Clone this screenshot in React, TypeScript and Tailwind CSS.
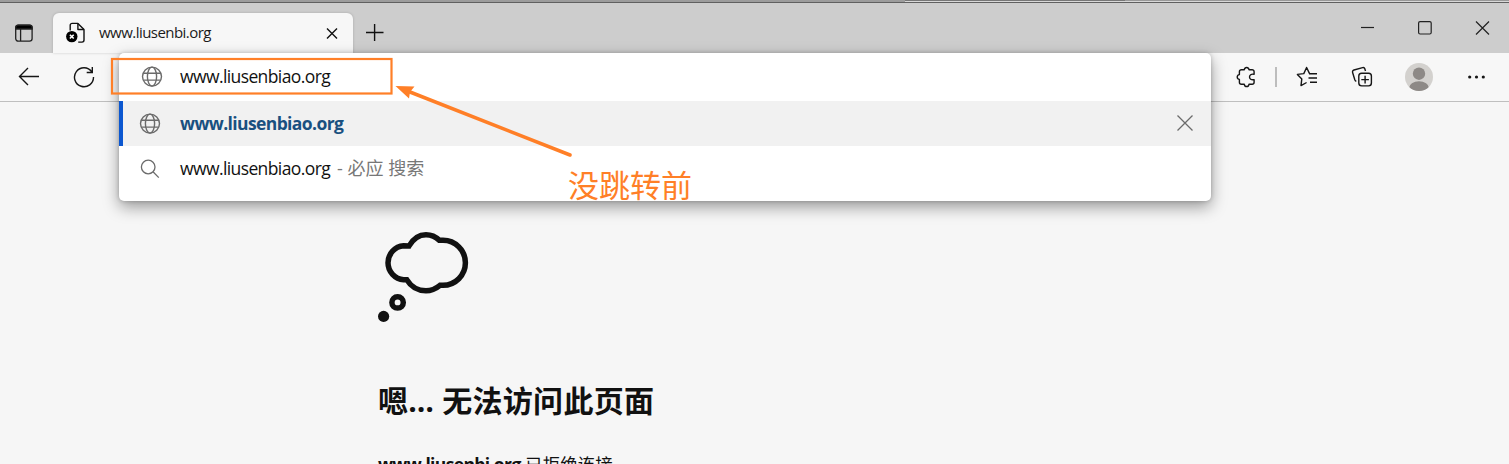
import React from "react";

const ui = "font-['Open_Sans','Noto_Sans_CJK_SC',sans-serif]";

function Globe({ className = "" }: { className?: string }) {
  return (
    <svg className={className} width="22" height="22" viewBox="0 0 22 22" fill="none" stroke="#6b6b6b" strokeWidth="1.4">
      <circle cx="11" cy="10.6" r="9.5" />
      <ellipse cx="11" cy="10.6" rx="4.6" ry="9.5" />
      <path d="M2.4 7.3h17.2M2.4 14.1h17.2" />
    </svg>
  );
}

function TabStrip() {
  return (
    <div className="flex h-[50px] items-end bg-[#cdcdcd]">
      <div className="flex h-10 w-[53px] shrink-0 pl-[14px] pt-[11px]">
        <svg width="20" height="20" viewBox="0 0 20 20" fill="none" stroke="#222" strokeWidth="1.3">
          <rect x="1.7" y="1.2" width="16.4" height="16" rx="2.6" />
          <path d="M1.7 5V3.8a2.6 2.6 0 0 1 2.600-2.600h11.200a2.600 2.600 0 0 1 2.600 2.600V5z" fill="#000" />
          <path d="M6.600 5v12" />
        </svg>
      </div>
      <div className="flex h-10 w-[300px] shrink-0 items-center rounded-t-[6px] bg-[#f7f7f7] pl-[13px] shadow-[0_0_3px_rgba(0,0,0,0.18)]">
        <svg width="20" height="22" viewBox="0 0 20 22" fill="none" stroke="#111" strokeWidth="1.4" strokeLinejoin="round">
          <path d="M4.200 8.500V3.300A1.900 1.900 0 0 1 6.100 1.400h5.800L18 7.500v10.600a2 2 0 0 1-2 2h-3.800" />
          <path d="M11.900 1.600v5.900H18" />
          <circle cx="5.800" cy="14.600" r="5.700" fill="#000" stroke="none" />
          <path d="M3.900 12.700l3.800 3.800m0-3.800l-3.800 3.800" stroke="#fff" strokeWidth="1.600" />
        </svg>
        <span className="relative -top-px ml-[13px] w-[114px] whitespace-nowrap text-[15px] tracking-[-0.54px] text-[#1b1b1b]">www.liusenbi.org</span>
        <svg className="ml-[112px]" width="14" height="14" viewBox="0 0 14 14" fill="none" stroke="#111" strokeWidth="1.4">
          <path d="M2 2.600l10 10M12 2.600l-10 10" />
        </svg>
      </div>
      <svg className="mb-[10px] ml-[12px]" width="20" height="20" viewBox="0 0 20 20" fill="none" stroke="#111" strokeWidth="1.4">
        <path d="M1 9.500h17.500M9.600 1v17" />
      </svg>
      <div className="ml-auto flex h-[50px] items-start pt-[16px]">
        <svg width="148" height="18" viewBox="0 0 148 18" fill="none" stroke="#222" strokeWidth="1.2">
          <path d="M0 8.500h13" />
          <rect x="57.600" y="2.600" width="12.600" height="12.400" rx="1.500" />
          <path d="M115 2.500l13 13M128 2.500l-13 13" />
        </svg>
      </div>
    </div>
  );
}

function Toolbar() {
  return (
    <div className="flex h-[49px] items-center border-b border-[#bfbfbf] bg-[#f7f7f7]">
      <svg className="ml-[18px]" width="22" height="20" viewBox="0 0 22 20" fill="none" stroke="#161616" strokeWidth="1.400">
        <path d="M21 9.500H1.500M10 1L1.500 9.500 10 18" />
      </svg>
      <svg className="ml-[33px]" width="22" height="22" viewBox="0 0 22 22" fill="none" stroke="#161616" strokeWidth="1.400">
        <path d="M18.800 5.800A9.500 9.500 0 1 0 20.500 11M19.300 1v5.500h-5.600" />
      </svg>
      <div className="ml-auto flex items-center">
        <svg width="22" height="22" viewBox="0 0 22 22" fill="none" stroke="#161616" strokeWidth="1.400" strokeLinejoin="round">
          <path d="M5.400 3.700H8.300C8.800.700 12.500.700 13 3.700h3.100a2 2 0 0 1 2 2v2.600C15 7.700 13.500 9.200 13.500 11s1.500 3.200 4.600 2.700v2.600a2 2 0 0 1-2 2H13c-.5 3-4.200 3-4.700 0H5.400a2 2 0 0 1-2-2v-2.900C.500 12.900.500 9.100 3.400 8.600V5.700a2 2 0 0 1 2-2z" />
        </svg>
        <div className="ml-[17px] h-5 w-[2px] bg-[#bdbdbd]" />
        <svg className="ml-[19px]" width="22" height="22" viewBox="0 0 22 22" fill="none" stroke="#161616" strokeWidth="1.400" strokeLinejoin="round">
          <path d="M13.400 7.400L10.600 1.500 7.800 7.600 1.400 8.400l4.400 4.500L5 19.600l5.600-3.100M13 7.700h8M12.500 12h8.500M14 16.300h7" />
        </svg>
        <svg className="ml-[33px]" width="22" height="22" viewBox="0 0 22 22" fill="none" stroke="#161616" strokeWidth="1.400">
          <path d="M14.500 5l-.7-2.200a1.800 1.800 0 0 0-2.200-1.200L3 4a2 2 0 0 0-1.400 2.500l2.200 7.300a2.500 2.500 0 0 0 1.500 1.500" />
          <rect x="7.800" y="7.300" width="12.600" height="12.600" rx="2.800" />
          <path d="M14.100 9.800v7.600M10.300 13.600h7.600" />
        </svg>
        <svg className="ml-[32px]" width="28" height="28" viewBox="0 0 28 28">
          <defs>
            <clipPath id="avatar"><circle cx="14" cy="14" r="14" /></clipPath>
          </defs>
          <circle cx="14" cy="14" r="14" fill="#d3d1ce" />
          <circle cx="14" cy="10.700" r="6.200" fill="#8d8986" />
          <ellipse cx="14" cy="25" rx="10" ry="6.800" fill="#8d8986" clipPath="url(#avatar)" />
        </svg>
        <svg className="ml-[34px] mr-[22px]" width="20" height="6" viewBox="0 0 20 6" fill="#161616">
          <circle cx="2.700" cy="3" r="1.600" /><circle cx="9.500" cy="3" r="1.600" /><circle cx="16.300" cy="3" r="1.600" />
        </svg>
      </div>
    </div>
  );
}

function Suggestions() {
  return (
    <div className="absolute left-[119px] top-[53px] w-[1092px] rounded-[5px] bg-white pb-[10px] shadow-[0_6px_16px_rgba(0,0,0,0.38),0_0_4px_rgba(0,0,0,0.2)]">
      <div className="flex h-12 items-center pl-[22px]">
        <Globe />
        <span className="mb-px ml-[17px] whitespace-nowrap text-[17.5px] tracking-[-0.6px] text-[#111]">www.liusenbiao.org</span>
      </div>
      <div className="flex h-[45px] items-center border-l-4 border-[#0b57d0] bg-[#f1f1f1] pl-4">
        <Globe />
        <span className="mb-px ml-[19px] whitespace-nowrap text-[17.5px] font-bold tracking-[-0.6px] text-[#195080]">www.liusenbiao.org</span>
        <svg className="mb-px ml-auto mr-[17px]" width="18" height="18" viewBox="0 0 18 18" stroke="#6b6b6b" strokeWidth="1.300">
          <path d="M1.500 1.500l15 15M16.500 1.500l-15 15" />
        </svg>
      </div>
      <div className="flex h-[45px] items-center pl-[20px]">
        <svg width="22" height="22" viewBox="0 0 22 22" fill="none" stroke="#6b6b6b" strokeWidth="1.300">
          <circle cx="9.200" cy="9" r="6.800" /><path d="M14 13.800l5.800 5.800" />
        </svg>
        <span className="mb-px ml-[19px] whitespace-nowrap text-[17.5px] tracking-[-0.6px] text-[#111]">www.liusenbiao.org</span>
        <span className="mb-px ml-[7px] whitespace-nowrap text-[18px] text-[#777]">- 必应 搜索</span>
      </div>
    </div>
  );
}

export default function App() {
  return (
    <div className={`relative h-[464px] w-full overflow-hidden bg-[#f6f6f6] ${ui}`}>
      <div className="flex h-[2px]">
        <div className="w-[905px] bg-[#9c9c9c]" />
        <div className="w-[220px] border-b border-[#d8d8d8] bg-[#777]" />
        <div className="flex-1 border-b border-[#d8d8d8] bg-[#999]" />
      </div>
      <div className="h-px bg-[#606060]" />
      <TabStrip />
      <Toolbar />
      <main className="pl-[378px] pt-[129px] text-[#111]">
        <svg width="92" height="92" viewBox="0 0 92 92" fill="none" stroke="#111" strokeWidth="5.500">
          <path d="M31 15C35 8 41 3.700 48 3.700c6 0 10 2.300 13.300 5.600H65a22.400 22.500 0 0 1 0 45h-3C58 57.500 54 59.800 48 59.800c-8 0-15-4-19.300-11.100h-3a17 17 0 0 1 0-33.900z" />
          <circle cx="19.600" cy="71.400" r="5.700" />
          <circle cx="5.600" cy="85.400" r="5.600" fill="#111" stroke="none" />
        </svg>
        <h1 className="mt-[56px] h-11 whitespace-nowrap text-[30px] font-bold leading-[44px] tracking-[0.28px]">嗯… 无法访问此页面</h1>
        <p className="mt-[27px] whitespace-nowrap text-[17.5px] leading-[28px]">
          <b className="tracking-[-0.63px]">www.liusenbi.org</b> 已拒绝连接。
        </p>
      </main>
      <Suggestions />
      <svg className="absolute left-0 top-0" width="720" height="220" viewBox="0 0 720 220" fill="none" stroke="#ff7f27">
        <rect x="112" y="59" width="279.500" height="34.500" strokeWidth="2.200" />
        <path d="M410 92l160 63" strokeWidth="3.500" strokeLinecap="round" />
        <path d="M395.500 86l19 .5-4.500 5.500-1 6.500z" fill="#ff7f27" stroke="none" />
      </svg>
      <div className="absolute left-[568px] top-[163px] whitespace-nowrap text-[31px] leading-[44px] text-[#ff7f27]">没跳转前</div>
    </div>
  );
}
